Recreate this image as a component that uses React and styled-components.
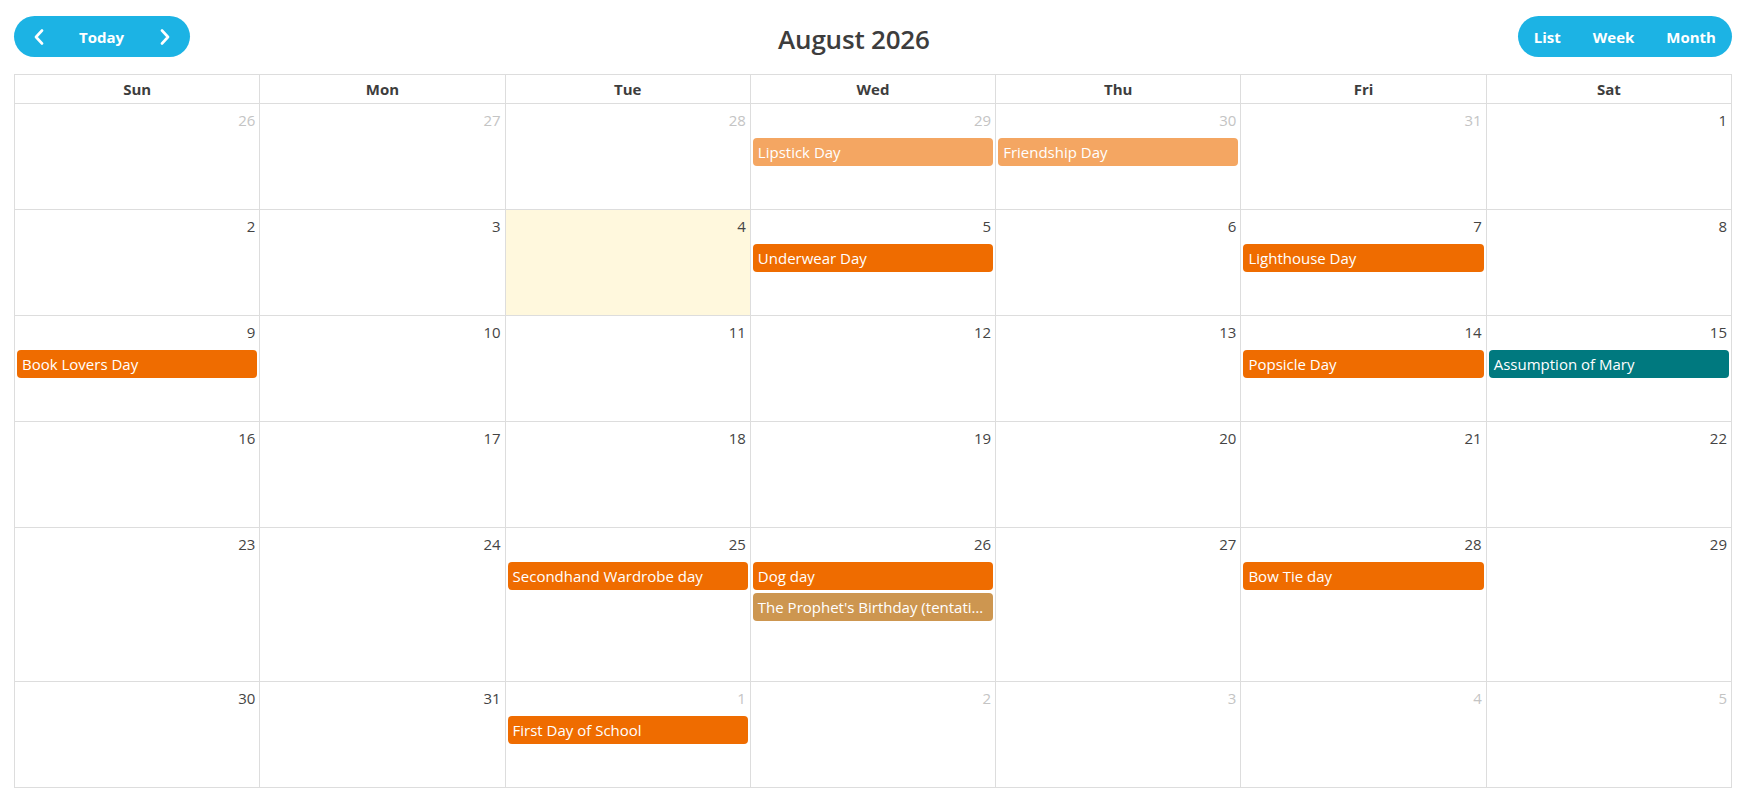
import styled, { createGlobalStyle } from "styled-components";

const GlobalStyle = createGlobalStyle`
  html, body {
    margin: 0;
    padding: 0;
    background: #fff;
  }
  body {
    font-family: "Open Sans", "Noto Sans", sans-serif;
    color: #444;
  }
`;

const Page = styled.div`
  padding: 16px 16px 4px 14px;
`;

const Toolbar = styled.div`
  display: flex;
  justify-content: space-between;
  align-items: center;
  height: 41px;
  margin-bottom: 17px;
`;

const Pill = styled.div`
  display: flex;
  height: 41px;
  background: #1cb3e4;
  border-radius: 21px;
  overflow: hidden;
`;

const PillButton = styled.button`
  display: flex;
  align-items: center;
  justify-content: center;
  height: 100%;
  padding: ${(p) => (p.icon ? "0" : "0 16px")};
  width: ${(p) => (p.icon ? `${p.icon}px` : "auto")};
  border: 0;
  background: transparent;
  color: #fff;
  font-family: inherit;
  font-size: 15px;
  font-weight: 700;
  cursor: pointer;
`;

const Title = styled.h2`
  margin: 0;
  padding-top: 4px;
  font-size: 26px;
  font-weight: 600;
  color: #3d3d3d;
  letter-spacing: -0.2px;
`;

const Table = styled.div`
  border-top: 1px solid #ddd;
  border-left: 1px solid #ddd;
`;

const Row = styled.div`
  display: grid;
  grid-template-columns: repeat(7, 1fr);
  height: ${(p) => p.height}px;
`;

const HeadCell = styled.div`
  display: flex;
  align-items: center;
  justify-content: center;
  border-right: 1px solid #ddd;
  border-bottom: 1px solid #ddd;
  font-size: 15px;
  font-weight: 700;
  color: #3d3d3d;
`;

const DayCell = styled.div`
  display: flex;
  flex-direction: column;
  min-width: 0;
  border-right: 1px solid #ddd;
  border-bottom: 1px solid #ddd;
  background: ${(p) => (p.today ? "#fff8dd" : "#fff")};
`;

const DayNumber = styled.div`
  height: 34px;
  padding: 5px 4px 0 0;
  box-sizing: border-box;
  text-align: right;
  font-size: 15px;
  line-height: 22px;
  color: ${(p) => (p.outside ? "#c4c4c4" : "#444")};
`;

const EventList = styled.div`
  display: flex;
  flex-direction: column;
  gap: 3px;
  padding: 0 2px;
`;

const Event = styled.div`
  height: 28px;
  line-height: 28px;
  padding: 0 5px;
  border-radius: 4px;
  background: ${(p) => p.color};
  color: #fff;
  font-size: 15px;
  white-space: nowrap;
  overflow: hidden;
  text-overflow: ellipsis;
`;

const ORANGE = "#ef6c00";
const LIGHT = "#f4a662";
const TEAL = "#00797f";
const TAN = "#cd9650";

const eventsByKey = {
  "7-29": [{ title: "Lipstick Day", color: LIGHT }],
  "7-30": [{ title: "Friendship Day", color: LIGHT }],
  "8-5": [{ title: "Underwear Day", color: ORANGE }],
  "8-7": [{ title: "Lighthouse Day", color: ORANGE }],
  "8-9": [{ title: "Book Lovers Day", color: ORANGE }],
  "8-14": [{ title: "Popsicle Day", color: ORANGE }],
  "8-15": [{ title: "Assumption of Mary", color: TEAL }],
  "8-25": [{ title: "Secondhand Wardrobe day", color: ORANGE }],
  "8-26": [
    { title: "Dog day", color: ORANGE },
    { title: "The Prophet's Birthday (tentative)", color: TAN },
  ],
  "8-28": [{ title: "Bow Tie day", color: ORANGE }],
  "9-1": [{ title: "First Day of School", color: ORANGE }],
};

function buildWeeks() {
  const weeks = [];
  const start = new Date(2026, 6, 26);
  for (let w = 0; w < 6; w++) {
    const days = [];
    for (let d = 0; d < 7; d++) {
      const date = new Date(start);
      date.setDate(start.getDate() + w * 7 + d);
      const month = date.getMonth() + 1;
      const day = date.getDate();
      days.push({
        day,
        outside: month !== 8,
        today: month === 8 && day === 4,
        events: eventsByKey[`${month}-${day}`] || [],
      });
    }
    weeks.push(days);
  }
  return weeks;
}

const Chevron = ({ dir }) => (
  <svg width="12" height="16" viewBox="0 0 12 16" fill="none">
    <polyline
      points={dir === "left" ? "9,1.5 3,8 9,14.5" : "3,1.5 9,8 3,14.5"}
      stroke="#fff"
      strokeWidth="2.6"
      strokeLinecap="round"
      strokeLinejoin="round"
    />
  </svg>
);

const dayNames = ["Sun", "Mon", "Tue", "Wed", "Thu", "Fri", "Sat"];

export default function App() {
  const weeks = buildWeeks();
  return (
    <Page>
      <GlobalStyle />
      <Toolbar>
        <Pill>
          <PillButton icon={49}>
            <Chevron dir="left" />
          </PillButton>
          <PillButton>Today</PillButton>
          <PillButton icon={50}>
            <Chevron dir="right" />
          </PillButton>
        </Pill>
        <Title>August 2026</Title>
        <Pill>
          <PillButton>List</PillButton>
          <PillButton>Week</PillButton>
          <PillButton>Month</PillButton>
        </Pill>
      </Toolbar>
      <Table>
        <Row height={29}>
          {dayNames.map((n) => (
            <HeadCell key={n}>{n}</HeadCell>
          ))}
        </Row>
        {weeks.map((week, i) => {
          const most = Math.max(...week.map((d) => d.events.length));
          return (
            <Row key={i} height={most > 1 ? 154 : 106}>
              {week.map((d) => (
                <DayCell key={`${i}-${d.day}`} today={d.today}>
                  <DayNumber outside={d.outside}>{d.day}</DayNumber>
                  <EventList>
                    {d.events.map((e) => (
                      <Event key={e.title} color={e.color}>
                        {e.title}
                      </Event>
                    ))}
                  </EventList>
                </DayCell>
              ))}
            </Row>
          );
        })}
      </Table>
    </Page>
  );
}
